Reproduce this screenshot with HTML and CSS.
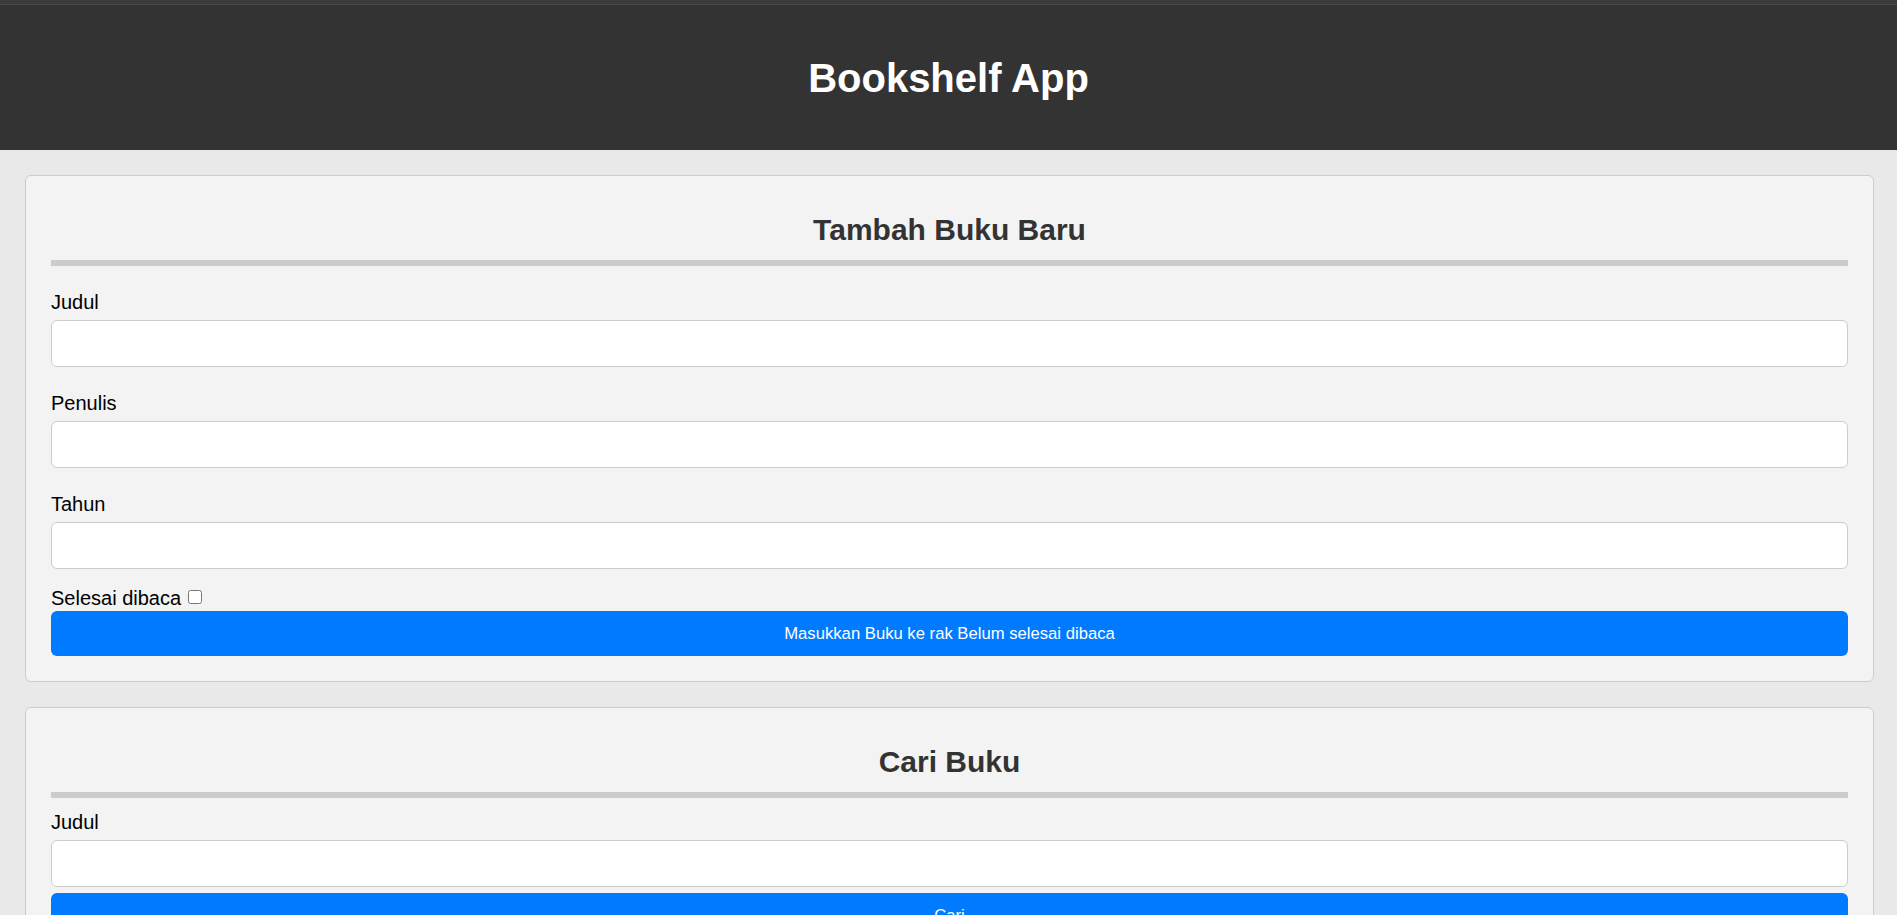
FILE: index.html
```html
<!DOCTYPE html>
<html lang="id">
<head>
<meta charset="utf-8">
<title>Bookshelf App</title>
<link rel="stylesheet" href="styles.css">
</head>
<body>
<div class="topbar"></div>
<header class="app-header">
  <h1 class="app-title">Bookshelf App</h1>
</header>
<main class="main">
  <section class="card">
    <h2 class="card-title">Tambah Buku Baru</h2>
    <div class="divider"></div>
    <form class="book-form">
      <div class="field">
        <label class="field-label" for="inputBookTitle">Judul</label>
        <input class="field-input" id="inputBookTitle" type="text">
      </div>
      <div class="field">
        <label class="field-label" for="inputBookAuthor">Penulis</label>
        <input class="field-input" id="inputBookAuthor" type="text">
      </div>
      <div class="field">
        <label class="field-label" for="inputBookYear">Tahun</label>
        <input class="field-input" id="inputBookYear" type="number">
      </div>
      <div class="check-row">
        <label class="check-label" for="inputBookIsComplete">Selesai dibaca</label>
        <input class="check-box" id="inputBookIsComplete" type="checkbox">
      </div>
      <button class="btn btn-submit" type="button">Masukkan Buku ke rak <span>Belum selesai dibaca</span></button>
    </form>
  </section>

  <section class="card">
    <h2 class="card-title">Cari Buku</h2>
    <div class="divider"></div>
    <form class="search-form">
      <label class="field-label search-label" for="searchBookTitle">Judul</label>
      <input class="field-input" id="searchBookTitle" type="text">
      <button class="btn btn-search" type="button">Cari</button>
    </form>
  </section>
</main>
</body>
</html>
```
FILE: styles.css
```css
* {
  box-sizing: border-box;
}

html, body {
  margin: 0;
  padding: 0;
}

body {
  background: #e9e9e9;
  font-family: "Liberation Sans", Arial, sans-serif;
  color: #000;
}

.topbar {
  height: 5px;
  background: #3c3c3c;
  border-bottom: 1px solid #4a4a4a;
}

.app-header {
  height: 145px;
  background: #333333;
  display: flex;
  align-items: center;
  justify-content: center;
}

.app-title {
  margin: 0;
  color: #ffffff;
  font-size: 40px;
  font-weight: bold;
  line-height: 46px;
}

.main {
  padding: 25px 23px 0 25px;
  display: flex;
  flex-direction: column;
  gap: 25px;
}

.card {
  background: #f3f3f3;
  border: 1px solid #cccccc;
  border-radius: 6px;
  padding: 25px;
}

.card-title {
  margin: 12px 0 0;
  font-size: 30px;
  line-height: 34px;
  font-weight: bold;
  text-align: center;
  color: #333333;
}

.divider {
  margin-top: 13px;
  height: 6px;
  background: #cccccc;
}

.book-form {
  display: flex;
  flex-direction: column;
}

.field {
  display: flex;
  flex-direction: column;
  margin-top: 25px;
}

.field-label {
  display: block;
  font-size: 20px;
  line-height: 23px;
  margin-bottom: 6px;
}

.field-input {
  display: block;
  width: 100%;
  height: 47px;
  padding: 0 12px;
  border: 1px solid #cccccc;
  border-radius: 6px;
  background: #ffffff;
  font-family: "Liberation Sans", Arial, sans-serif;
  font-size: 20px;
  outline: none;
}

.check-row {
  margin-top: 18px;
  font-size: 20px;
  line-height: 23px;
  height: 23px;
}

.check-label {
  font-size: 20px;
}

.check-box {
  margin: 0 0 0 1px;
  width: 14px;
  height: 14px;
  vertical-align: 1px;
}

.btn {
  display: block;
  width: 100%;
  border: none;
  border-radius: 6px;
  background: #007bff;
  color: #ffffff;
  font-family: "Liberation Sans", Arial, sans-serif;
  font-size: 16.67px;
  text-align: center;
  cursor: pointer;
}

.btn-submit {
  margin-top: 1px;
  height: 45px;
}

.search-form {
  display: flex;
  flex-direction: column;
}

.search-label {
  margin-top: 13px;
}

.btn-search {
  margin-top: 6px;
  height: 45px;
}
```
